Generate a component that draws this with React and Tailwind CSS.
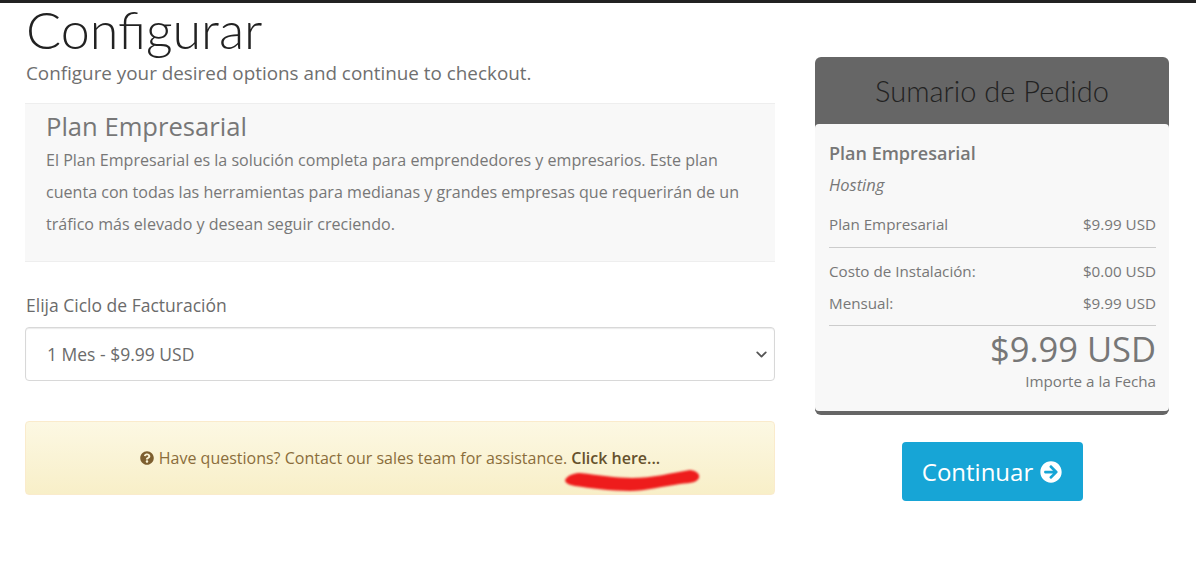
import React from "react";
import { ChevronDown } from "lucide-react";
import { FaQuestionCircle, FaArrowCircleRight } from "react-icons/fa";

const SummaryRow = ({ label, value }) => (
  <div className="flex justify-between h-8 items-center">
    <span>{label}</span>
    <span>{value}</span>
  </div>
);

const App = () => (
  <div className="relative w-[1196px] h-[587px] overflow-hidden bg-white font-['Open_Sans',sans-serif] text-[#6b6b6b]">
    <div className="h-[3px] bg-[#222222]" />
    <div className="flex pl-[25px] pr-[27px] gap-10">
      <main className="w-[750px]">
        <h1 className="ml-px mt-[0px] h-[52px] font-['Lato',sans-serif] font-light text-[52px] leading-[52px] text-[#222222]">Configurar</h1>
        <p className="ml-px mt-[5px] text-[18.85px] leading-[26px] text-[#6f6f6f]">Configure your desired options and continue to checkout.</p>

        <section className="mt-[17px] h-[159px] border-y border-[#eeeeee] bg-[#f8f8f8] pl-[21px] pr-4 text-[#777777]">
          <h2 className="pt-[7px] pb-[1px] text-[25.6px] leading-[32px]">Plan Empresarial</h2>
          <p className="text-[16.07px] leading-[32px]">
            El Plan Empresarial es la solución completa para emprendedores y empresarios. Este plan
            <br />
            cuenta con todas las herramientas para medianas y grandes empresas que requerirán de un
            <br />
            tráfico más elevado y desean seguir creciendo.
          </p>
        </section>

        <label className="block ml-px mt-[31px] text-[17.5px] leading-[24px]">Elija Ciclo de Facturación</label>
        <div className="mt-[10px] flex h-[54px] items-center justify-between rounded border border-[#d8d8d8] bg-white pl-[21px] pr-[4px] shadow-[inset_0_1px_1px_rgba(0,0,0,0.08)] text-[17.5px]">
          <span>1 Mes - $9.99 USD</span>
          <ChevronDown size={17} strokeWidth={2.5} className="text-[#555555]" />
        </div>

        <div className="mt-[40px] flex h-[74px] items-center justify-center gap-[5px] rounded border border-[#faebcc] bg-gradient-to-b from-[#fcf8e3] to-[#f8efc8] text-[16px] text-[#8a6d3b]">
          <FaQuestionCircle size={14} className="text-[#7d5f2f]" />
          <span>
            Have questions? Contact our sales team for assistance. <strong className="font-semibold text-[#66512c]">Click here...</strong>
          </span>
        </div>
      </main>

      <aside className="mt-[54px] w-[354px]">
        <div className="rounded-md border-b-4 border-[#666666] bg-[#666666]">
          <h2 className="flex h-[67px] items-center justify-center font-['Lato',sans-serif] font-light text-[29px] text-[#222222]">Sumario de Pedido</h2>
          <div className="h-[287px] rounded bg-[#f8f8f8] pl-[14px] pr-[13px] pt-[17px] text-[15.2px] text-[#777777]">
            <div className="text-[18px] leading-6 font-semibold">Plan Empresarial</div>
            <div className="mt-2 text-[16.5px] leading-6 italic">Hosting</div>
            <div className="mt-[11px] border-b border-[#cccccc] pb-[7px]">
              <SummaryRow label="Plan Empresarial" value="$9.99 USD" />
            </div>
            <div className="mt-[7px] border-b border-[#cccccc] pb-[6px]">
              <SummaryRow label="Costo de Instalación:" value="$0.00 USD" />
              <SummaryRow label="Mensual:" value="$9.99 USD" />
            </div>
            <div className="mt-[1px] text-right text-[34.5px] leading-[44px]">$9.99 USD</div>
            <div className="text-right text-[15.2px] leading-5">Importe a la Fecha</div>
          </div>
        </div>
        <div className="mt-[27px] flex justify-center">
          <button className="flex h-[59px] w-[181px] items-center justify-center gap-[7px] rounded bg-[#17a5d6] text-[24px] text-white">
            Continuar
            <FaArrowCircleRight size={22} />
          </button>
        </div>
      </aside>
    </div>

    {/* marker scribble over the screenshot */}
    <svg className="absolute left-[560px] top-[466px] blur-[1px]" width="145" height="30" viewBox="0 0 145 30">
      <path d="M5 14 C 8 9, 14 7, 20 7 C 40 9, 55 12, 72 12 C 92 12, 112 7, 130 4 C 137 5, 140 8, 139 12 C 137 16, 132 17, 120 18 C 105 20, 85 25, 70 25 C 50 25, 30 22, 15 20 C 9 19, 5 17, 5 14 Z" fill="#ee1c1c" />
    </svg>
  </div>
);

export default App;
